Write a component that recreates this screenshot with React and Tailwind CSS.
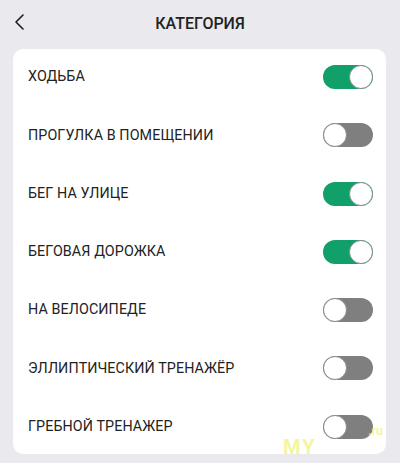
import { useState } from 'react';

const initial = [
    { label: 'ХОДЬБА', on: true },
    { label: 'ПРОГУЛКА В ПОМЕЩЕНИИ', on: false },
    { label: 'БЕГ НА УЛИЦЕ', on: true },
    { label: 'БЕГОВАЯ ДОРОЖКА', on: true },
    { label: 'НА ВЕЛОСИПЕДЕ', on: false },
    { label: 'ЭЛЛИПТИЧЕСКИЙ ТРЕНАЖЁР', on: false },
    { label: 'ГРЕБНОЙ ТРЕНАЖЕР', on: false },
];

function Toggle({ on, onClick }) {
    return (
        <button
            onClick={onClick}
            className={`relative flex h-[24px] w-[50px] shrink-0 items-center rounded-full ${on ? 'justify-end bg-[#12a06a]' : 'justify-start bg-[#7f7f7f]'}`}
        >
            <span className="h-[24px] w-[24px] rounded-full border border-[#8a8a8a] bg-white"></span>
        </button>
    );
}

export default function App() {
    const [items, setItems] = useState(initial);

    const toggle = (i) => {
        setItems(items.map((it, idx) => (idx === i ? { ...it, on: !it.on } : it)));
    };

    return (
        <div className="relative h-[463px] w-[400px] overflow-hidden bg-[#e9e9ee] font-['Roboto',sans-serif] text-[#222]">
            {/* Header */}
            <div className="relative flex h-[49px] items-center justify-center">
                <svg className="absolute left-[13px] top-[13px]" width="14" height="18" viewBox="0 0 14 18" fill="none">
                    <path d="M10 2 L3 9 L10 16" stroke="#1e1e1e" strokeWidth="1.6" strokeLinecap="round" strokeLinejoin="round" />
                </svg>
                <h1 className="-mt-[1px] text-[16px] font-medium">КАТЕГОРИЯ</h1>
            </div>

            {/* Card */}
            <div className="mx-[13px] flex w-[373px] flex-col gap-[6.3px] rounded-[10px] bg-white pl-[15px] pr-[13px] pt-[2px] pb-[1px]">
                {items.map((it, i) => (
                    <div key={it.label} className="flex h-[52px] items-center justify-between">
                        <span className="text-[14.3px] tracking-[0.1px]">{it.label}</span>
                        <Toggle on={it.on} onClick={() => toggle(i)} />
                    </div>
                ))}
            </div>

            {/* watermark */}
            <span className="pointer-events-none absolute left-[283px] top-[432px] text-[20px] font-bold tracking-[2px] text-[#f2f27a] opacity-70">MY</span>
            <span className="pointer-events-none absolute left-[368px] top-[422px] text-[12px] font-bold text-[#f2f27a] opacity-70">.ru</span>
        </div>
    );
}
